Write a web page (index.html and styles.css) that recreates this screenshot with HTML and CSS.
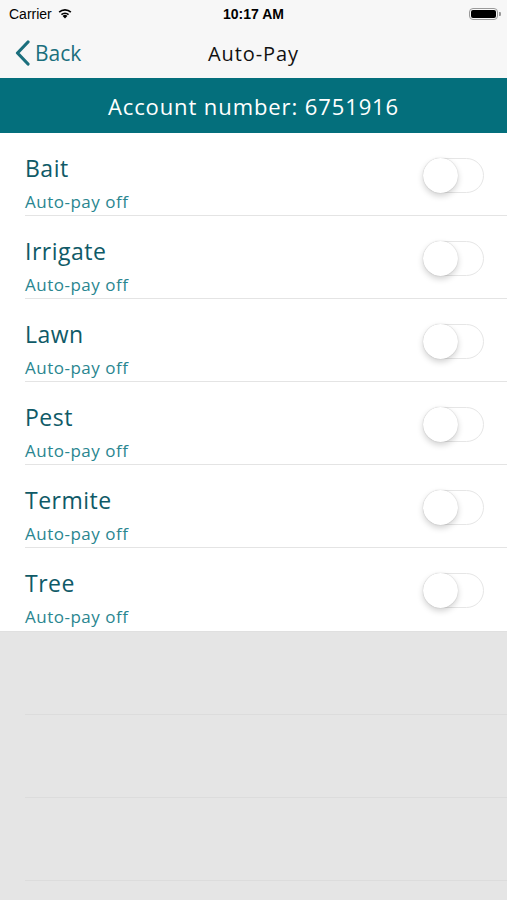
FILE: index.html
```html
<!DOCTYPE html>
<html>
<head>
<meta charset="utf-8">
<link rel="stylesheet" href="styles.css">
</head>
<body>
<div class="statusbar">
  <div class="sb-left">
    <span class="carrier">Carrier</span>
    <svg class="wifi" width="16" height="12" viewBox="0 0 16 12"><path d="M8 11.5 L5.6 8.9 A3.5 3.5 0 0 1 10.4 8.9 Z" fill="#000"/><path d="M3.9 7.1 A5.8 5.8 0 0 1 12.1 7.1 L11 8.3 A4.2 4.2 0 0 0 5 8.3 Z" fill="#000"/><path d="M1.6 4.6 A9.2 9.2 0 0 1 14.4 4.6 L13.3 5.8 A7.6 7.6 0 0 0 2.7 5.8 Z" fill="#000"/></svg>
  </div>
  <div class="time">10:17 AM</div>
  <div class="sb-right">
    <div class="battery"><div class="battery-fill"></div></div>
    <div class="battery-tip"></div>
  </div>
</div>
<div class="navbar">
  <div class="back">
    <svg width="17" height="26" viewBox="0 0 17 26"><path d="M14 2 L3.5 13 L14 24" fill="none" stroke="#1b6f7d" stroke-width="3.2" stroke-linecap="round" stroke-linejoin="round"/></svg>
    <span>Back</span>
  </div>
  <div class="nav-title">Auto-Pay</div>
</div>
<div class="band">Account number: 6751916</div>
<div class="list">
  <div class="row"><div class="text"><div class="title">Bait</div><div class="sub">Auto-pay off</div></div><div class="switch"><div class="knob"></div></div></div>
  <div class="row"><div class="text"><div class="title">Irrigate</div><div class="sub">Auto-pay off</div></div><div class="switch"><div class="knob"></div></div></div>
  <div class="row"><div class="text"><div class="title">Lawn</div><div class="sub">Auto-pay off</div></div><div class="switch"><div class="knob"></div></div></div>
  <div class="row"><div class="text"><div class="title">Pest</div><div class="sub">Auto-pay off</div></div><div class="switch"><div class="knob"></div></div></div>
  <div class="row"><div class="text"><div class="title">Termite</div><div class="sub">Auto-pay off</div></div><div class="switch"><div class="knob"></div></div></div>
  <div class="row last"><div class="text"><div class="title">Tree</div><div class="sub">Auto-pay off</div></div><div class="switch"><div class="knob"></div></div></div>
</div>
<div class="empty">
  <div class="erow"></div>
  <div class="erow"></div>
  <div class="erow"></div>
</div>
</body>
</html>
```
FILE: styles.css
```css
html, body {
  margin: 0;
  padding: 0;
}
body {
  background: #e5e5e5;
  font-family: "Open Sans", "Lato", sans-serif;
  width: 507px;
  height: 900px;
  overflow: hidden;
}
.statusbar {
  height: 28px;
  background: #f7f7f7;
  display: flex;
  align-items: center;
  justify-content: space-between;
  padding: 0 6px 0 9px;
  position: relative;
  font-family: "Liberation Sans", Arial, sans-serif;
}
.sb-left {
  display: flex;
  align-items: center;
  gap: 5px;
  font-size: 14px;
  color: #000;
}
.wifi { margin-top: -2px; }
.time {
  position: absolute;
  left: 0;
  right: 0;
  text-align: center;
  font-size: 14px;
  font-weight: bold;
  color: #000;
  pointer-events: none;
}
.sb-right {
  display: flex;
  align-items: center;
  gap: 1px;
}
.battery {
  width: 29px;
  height: 12px;
  border: 1px solid #9a9a9a;
  border-radius: 4px;
  padding: 1px;
  box-sizing: border-box;
}
.battery-fill {
  width: 100%;
  height: 100%;
  background: #000;
  border-radius: 2px;
}
.battery-tip {
  width: 2px;
  height: 4px;
  background: #9a9a9a;
  border-radius: 0 1px 1px 0;
}
.navbar {
  height: 50px;
  background: #f7f7f7;
  display: flex;
  align-items: center;
  position: relative;
}
.back {
  display: flex;
  align-items: center;
  gap: 4px;
  padding-left: 14px;
  color: #1b6f7d;
  font-size: 21px;
}
.back svg { margin-top: -1px; }
.nav-title {
  position: absolute;
  left: 0;
  right: 0;
  text-align: center;
  font-size: 20px;
  letter-spacing: 0.9px;
  color: #111;
  pointer-events: none;
}
.band {
  height: 55px;
  background: #046f7c;
  color: #fff;
  font-size: 22px;
  letter-spacing: 0.9px;
  display: flex;
  align-items: center;
  justify-content: center;
}
.list {
  background: #fff;
}
.row {
  height: 83px;
  display: flex;
  align-items: flex-start;
  justify-content: space-between;
  padding: 20px 23px 0 25px;
  box-sizing: border-box;
  position: relative;
}
.row::after {
  content: "";
  position: absolute;
  left: 25px;
  right: 0;
  bottom: 0;
  height: 1px;
  background: #e4e4e4;
}
.row.last::after { display: none; }
.text {
  display: flex;
  flex-direction: column;
}
.title {
  font-size: 23px;
  line-height: 30px;
  letter-spacing: 0.5px;
  color: #0f5a67;
}
.sub {
  font-size: 17px;
  line-height: 22px;
  letter-spacing: 0.5px;
  margin-top: 8px;
  color: #2a8690;
}
.switch {
  width: 61px;
  height: 35px;
  border: 1.5px solid #e6e6e6;
  border-radius: 18px;
  box-sizing: border-box;
  background: #fff;
  position: relative;
  align-self: center;
  margin-top: -19px;
}
.knob {
  position: absolute;
  left: -1px;
  top: -1px;
  width: 35px;
  height: 35px;
  border-radius: 50%;
  background: #fff;
  box-shadow: 0 3px 6px rgba(0,0,0,0.18), 0 0 1px rgba(0,0,0,0.25);
}
.empty {
  border-top: 1px solid #e0e0e0;
}
.erow {
  height: 83px;
  margin-left: 25px;
  border-bottom: 1px solid #dcdcdc;
  box-sizing: border-box;
}
```
